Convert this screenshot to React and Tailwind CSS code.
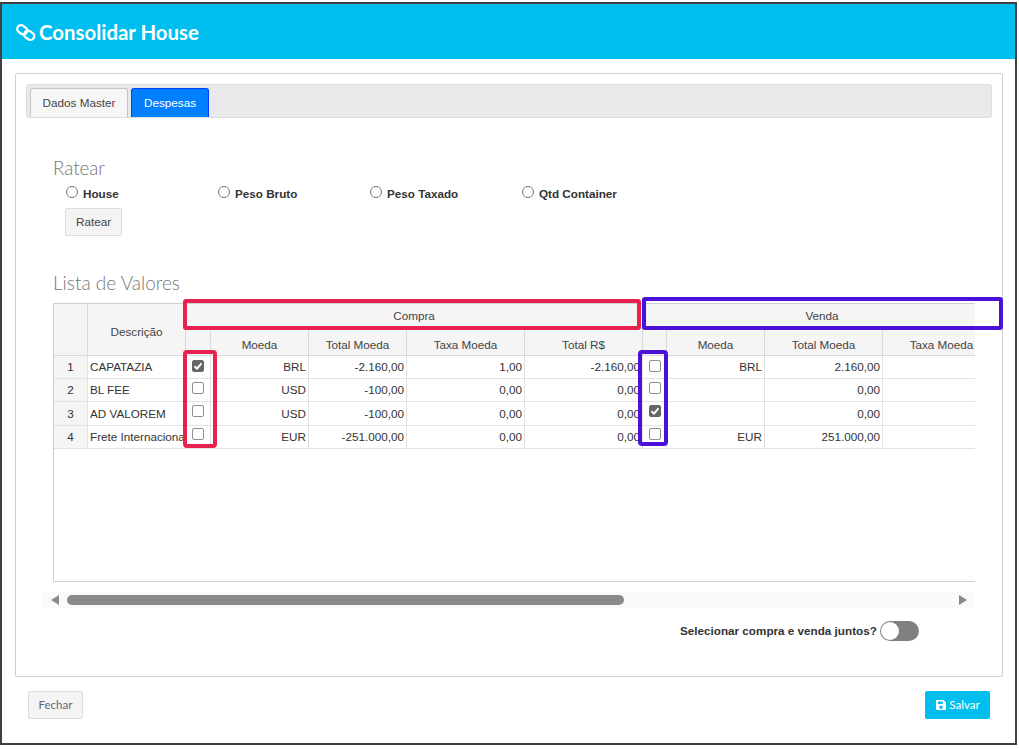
const rows = [
  { n: 1, desc: 'CAPATAZIA', buy: true, sell: false, moeda: 'BRL', total: '-2.160,00', taxa: '1,00', totalRs: '-2.160,00', vMoeda: 'BRL', vTotal: '2.160,00', vTaxa: '' },
  { n: 2, desc: 'BL FEE', buy: false, sell: false, moeda: 'USD', total: '-100,00', taxa: '0,00', totalRs: '0,00', vMoeda: '', vTotal: '0,00', vTaxa: '0,00' },
  { n: 3, desc: 'AD VALOREM', buy: false, sell: true, moeda: 'USD', total: '-100,00', taxa: '0,00', totalRs: '0,00', vMoeda: '', vTotal: '0,00', vTaxa: '0,00' },
  { n: 4, desc: 'Frete Internacional', buy: false, sell: false, moeda: 'EUR', total: '-251.000,00', taxa: '0,00', totalRs: '0,00', vMoeda: 'EUR', vTotal: '251.000,00', vTaxa: '0,00' },
]

const colWidths = [34, 98, 25, 98, 98, 118, 118, 24, 98, 118, 118]
const rowHeights = ['h-[23px]', 'h-[23px]', 'h-[24px]', 'h-[23px]']
const checkPads = ['pt-[4px]', 'pt-[3px]', 'pt-[3px]', 'pt-[2px]']
const radios = ['House', 'Peso Bruto', 'Peso Taxado', 'Qtd Container']

const th = 'border-r border-b border-[#d8d8d8] bg-[#f5f5f5] font-normal text-center text-[#444] p-0 overflow-hidden whitespace-nowrap'
const sub = `${th} pt-[5px]`
const td = 'border-r border-b border-[#e2e2e2] text-right pr-[2px] whitespace-nowrap overflow-hidden text-[#333]'
const checkTd = 'border-r border-b border-[#e2e2e2] align-top'

function Check({ checked }) {
  return (
    <span className={`block mx-auto w-[12px] h-[12px] rounded-[2px] border flex items-center justify-center ${checked ? 'bg-[#666] border-[#666]' : 'bg-white border-[#8f8f8f]'}`}>
      {checked && (
        <svg width="10" height="10" viewBox="0 0 10 10" fill="none" stroke="white" strokeWidth="2">
          <path d="M1.5 5.2L4 7.6L8.5 2.4" />
        </svg>
      )}
    </span>
  )
}

function ValuesTable() {
  return (
    <div className="relative ml-[37px] w-[922px] h-[279px] mt-[9px]">
      <div className="w-full h-full border-l border-b border-t border-[#cfcfcf] overflow-hidden">
        <table className="table-fixed border-separate border-spacing-0 w-[947px] text-[11.7px] font-['Liberation_Sans',sans-serif]">
          <colgroup>
            {colWidths.map((w, i) => <col key={i} style={{ width: w }} />)}
          </colgroup>
          <thead>
            <tr className="h-[25px]">
              <th rowSpan={2} className={th}></th>
              <th rowSpan={2} className={`${th} pt-[5px]`}>Descrição</th>
              <th colSpan={5} className={th}>Compra</th>
              <th colSpan={4} className={`${th} border-r-0`}>Venda</th>
            </tr>
            <tr className="h-[27px]">
              <th className={th}></th>
              <th className={sub}>Moeda</th>
              <th className={sub}>Total Moeda</th>
              <th className={sub}>Taxa Moeda</th>
              <th className={sub}>Total R$</th>
              <th className={th}></th>
              <th className={sub}>Moeda</th>
              <th className={sub}>Total Moeda</th>
              <th className={sub}>Taxa Moeda</th>
            </tr>
          </thead>
          <tbody>
            {rows.map((r, i) => (
              <tr key={r.n} className={rowHeights[i]}>
                <td className="border-r border-b border-[#e2e2e2] bg-[#f5f5f5] text-center text-[#333]">{r.n}</td>
                <td className="border-r border-b border-[#e2e2e2] pl-[2px] whitespace-nowrap overflow-hidden text-[#333]">{r.desc}</td>
                <td className={`${checkTd} ${checkPads[i]}`}><Check checked={r.buy} /></td>
                <td className={td}>{r.moeda}</td>
                <td className={td}>{r.total}</td>
                <td className={td}>{r.taxa}</td>
                <td className={td}>{r.totalRs}</td>
                <td className={`${checkTd} ${checkPads[i]}`}><Check checked={r.sell} /></td>
                <td className={td}>{r.vMoeda}</td>
                <td className={td}>{r.vTotal}</td>
                <td className={td}>{r.vTaxa}</td>
              </tr>
            ))}
          </tbody>
        </table>
      </div>

      {/* annotations drawn over the table */}
      <div className="absolute left-[130px] -top-[4px] w-[458px] h-[31px] border-[4px] border-[#e8224f] rounded-[3px]"></div>
      <div className="absolute left-[130px] top-[47px] w-[34px] h-[98px] border-[4px] border-[#e8224f] rounded-[4px]"></div>
      <div className="absolute left-[589px] -top-[6px] w-[361px] h-[33px] border-[4px] border-[#4a12d8] rounded-[3px]"></div>
      <div className="absolute left-[585px] top-[47px] w-[30px] h-[96px] border-[4px] border-[#4a12d8] rounded-[4px]"></div>
    </div>
  )
}

export default function App() {
  return (
    <div className="w-[1019px] h-[749px] bg-white pt-[2px] overflow-hidden font-['Liberation_Sans',sans-serif]">
      <div className="w-[1017px] h-[743px] border-2 border-[#404040] flex flex-col">
        <header className="h-[55px] shrink-0 bg-[#00bfef] flex items-center pl-[13px] gap-[3px] text-white">
          <svg width="21" height="20" viewBox="0 0 21 20" fill="none" stroke="white" strokeWidth="2.3">
            <rect x="2" y="4" width="10.5" height="7.5" rx="3.7" transform="rotate(35 7.2 7.7)" />
            <rect x="9" y="9.5" width="10.5" height="7.5" rx="3.7" transform="rotate(35 14.2 13.2)" />
          </svg>
          <h1 className="text-[20.4px] pt-[1px] font-bold font-['Lato',sans-serif]">Consolidar House</h1>
        </header>

        <main className="flex-1 pt-[14px] pl-[13px] pr-[13px]">
          <div className="w-[988px] h-[604px] border border-[#cfcfcf] rounded-[2px] pt-[10px]">
            <div className="ml-[10px] w-[966px] h-[34px] bg-[#e9e9e9] border border-[#dddddd] rounded-[3px] flex items-end pl-[3px] gap-[3px]">
              <button className="w-[98px] h-[29px] bg-[#f6f6f6] border border-b-0 border-[#c5c5c5] rounded-t-[3px] text-[11.7px] text-[#454545]">Dados Master</button>
              <button className="w-[78px] h-[29px] bg-[#007fff] border border-b-0 border-[#003eff] rounded-t-[3px] text-[11.7px] text-white">Despesas</button>
            </div>

            <h2 className="ml-[37px] mt-[39px] text-[18.7px] leading-[22px] font-light text-[#777] font-['Lato',sans-serif]">Ratear</h2>
            <div className="ml-[50px] mt-[6px] flex">
              {radios.map(r => (
                <label key={r} className="w-[152px] flex items-center gap-[5px] h-[18px] text-[11.7px] font-bold text-[#333]">
                  <input type="radio" name="ratear" className="w-[12px] h-[12px] m-0 -mt-[4px] accent-[#666]" />
                  {r}
                </label>
              ))}
            </div>
            <button className="ml-[49px] mt-[5px] block w-[57px] h-[28px] bg-[#f4f4f4] border border-[#dddddd] rounded-[2px] text-[11.7px] text-[#444]">Ratear</button>

            <h2 className="ml-[37px] mt-[36px] text-[19px] leading-[22px] font-light text-[#777] font-['Lato',sans-serif]">Lista de Valores</h2>

            <ValuesTable />

            <div className="ml-[27px] mt-[10px] w-[932px] h-[16px] bg-[#fafafa] flex items-center pl-[8px] pr-[8px] gap-[8px]">
              <svg width="8" height="10" viewBox="0 0 8 10" className="shrink-0"><path d="M8 0V10L0 5Z" fill="#8a8a8a" /></svg>
              <div className="w-[557px] h-[10px] bg-[#8a8a8a] rounded-full"></div>
              <svg width="8" height="10" viewBox="0 0 8 10" className="shrink-0 ml-auto"><path d="M0 0V10L8 5Z" fill="#8a8a8a" /></svg>
            </div>

            <div className="mt-[13px] ml-[664px] flex items-center gap-[3px]">
              <span className="text-[11.7px] font-bold text-[#333]">Selecionar compra e venda juntos?</span>
              <span className="w-[39px] h-[20px] rounded-full bg-[#808080] flex items-center pl-[1px]">
                <span className="w-[18px] h-[18px] rounded-full bg-white"></span>
              </span>
            </div>
          </div>

          <div className="mt-[14px] pl-[13px] pr-[13px] flex justify-between w-[988px]">
            <button className="w-[55px] h-[28px] bg-[#f4f4f4] border border-[#dddddd] rounded-[2px] text-[11.5px] text-[#667] font-['Lato',sans-serif]">Fechar</button>
            <button className="w-[65px] h-[28px] bg-[#00bfef] rounded-[2px] text-[11.5px] text-white flex items-center justify-center gap-[2px] font-['Lato',sans-serif]">
              <svg width="12" height="12" viewBox="0 0 12 12">
                <path fillRule="evenodd" fill="white" d="M1.5 1H8.5L11 3.5V9.8A1.2 1.2 0 0 1 9.8 11H2.2A1.2 1.2 0 0 1 1 9.8V1.5ZM3 2.5V5H7.8V2.5ZM6 6.5A1.7 1.7 0 1 0 6 9.9A1.7 1.7 0 1 0 6 6.5Z" />
              </svg>
              Salvar
            </button>
          </div>
        </main>
      </div>
    </div>
  )
}
